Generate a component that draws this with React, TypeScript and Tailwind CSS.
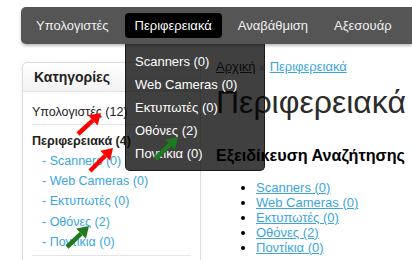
import React from "react";

const font = { fontFamily: '"Liberation Sans", Arial, sans-serif' };

function Arrow({ x1, y1, x2, y2, color }: { x1: number; y1: number; x2: number; y2: number; color: string }) {
  const dx = x2 - x1;
  const dy = y2 - y1;
  const len = Math.sqrt(dx * dx + dy * dy);
  const ux = dx / len;
  const uy = dy / len;
  const hl = 11;
  const hw = 7;
  const bx = x2 - ux * hl;
  const by = y2 - uy * hl;
  const px = -uy;
  const py = ux;
  return (
    <g>
      <line x1={x1} y1={y1} x2={bx} y2={by} stroke={color} strokeWidth={4.5} />
      <polygon
        points={`${x2},${y2} ${bx + px * hw},${by + py * hw} ${bx - px * hw},${by - py * hw}`}
        fill={color}
      />
    </g>
  );
}

export default function App() {
  const subs = ["Scanners (0)", "Web Cameras (0)", "Εκτυπωτές (0)", "Οθόνες (2)", "Ποντίκια (0)"];
  return (
    <div className="relative w-[412px] h-[260px] overflow-hidden bg-white text-[13px] text-[#222]" style={font}>
      {/* nav */}
      <div className="ml-[21px] mt-[7px] h-[37px] bg-[#555555] rounded-l-[5px] shadow-[0_2px_3px_rgba(0,0,0,0.25)] flex items-center pl-[5px] gap-[6px] text-[13px] text-[#f0f0f0]">
        <div className="px-[10px] h-[25px] flex items-center">Υπολογιστές</div>
        <div className="px-[10px] h-[25px] flex items-center bg-black rounded-[4px] text-white">Περιφερειακά</div>
        <div className="px-[10px] h-[25px] flex items-center">Αναβάθμιση</div>
        <div className="px-[10px] h-[25px] flex items-center">Αξεσουάρ</div>
      </div>

      <div className="flex">
        {/* sidebar */}
        <div className="shrink-0 ml-[22px] mt-[18px] w-[179px] h-[220px] border border-[#dddddd] rounded-tl-[5px] rounded-tr-[3px] shadow-[0_0_3px_rgba(0,0,0,0.06)] text-[12.5px]">
          <div className="h-[29px] flex items-center pl-[11px] font-bold text-[14px] text-[#222] bg-gradient-to-b from-white to-[#f2f2f2] border-b border-[#e2e2e2] rounded-t-[5px]">
            Κατηγορίες
          </div>
          <div className="px-[9px]">
            <div className="h-[33px] flex items-center pt-[8px] border-b border-[#e4e4e4] text-[#222]">
              Υπολογιστές (12)
            </div>
            <div className="h-[26px] flex items-center pt-[6px] font-bold text-[#222]">Περιφερειακά (4)</div>
            <div className="pl-[10px] text-[#3ba5df] pb-[3px]">
              {subs.map((s) => (
                <div key={s} className="h-[20.3px] flex items-center">
                  - {s}
                </div>
              ))}
            </div>
            <div className="border-b border-[#e4e4e4]"></div>
          </div>
        </div>

        {/* main */}
        <div className="ml-[15px] mt-[18px] flex flex-col">
          <div className="h-[14px] flex items-center text-[13px] mt-[-2px]">
            <span className="underline text-[#333]">Αρχική</span>
            <span className="text-[#999] px-[4px] text-[11px]">»</span>
            <span className="underline text-[#3ba5df]">Περιφερειακά</span>
          </div>
          <div className="mt-[11px] text-[32px] leading-[34px] text-[#2b2b2b] whitespace-nowrap">Περιφερειακά</div>
          <div className="mt-[26px] font-bold text-[16.2px] leading-[20px] text-black whitespace-nowrap">Εξειδίκευση Αναζήτησης</div>
          <ul className="mt-[15px] ml-[40px] list-disc text-[13px] leading-[15px] text-[#3ba5df]">
            {subs.map((s) => (
              <li key={s} className="marker:text-black">
                <span className="underline">{s}</span>
              </li>
            ))}
          </ul>
        </div>
      </div>

      {/* dropdown */}
      <div className="absolute left-[125px] top-[44px] w-[140px] h-[127px] bg-[rgba(0,0,0,0.75)] border border-[#1a1a1a] border-t-0 rounded-b-[5px] pt-[6px] pl-[9px] text-white text-[13px]">
        {subs.map((s) => (
          <div key={s} className="h-[23px] flex items-center">
            {s}
          </div>
        ))}
      </div>

      {/* arrows */}
      <svg className="absolute left-0 top-0 pointer-events-none" width={412} height={260}>
        <Arrow x1={78} y1={134} x2={101} y2={113} color="#ff0000" />
        <Arrow x1={90} y1={171} x2={113} y2={148} color="#ff0000" />
        <Arrow x1={155} y1={159} x2={178} y2={137} color="#1f7a1f" />
        <Arrow x1={67} y1={247} x2={89} y2={226} color="#1f7a1f" />
      </svg>
    </div>
  );
}
